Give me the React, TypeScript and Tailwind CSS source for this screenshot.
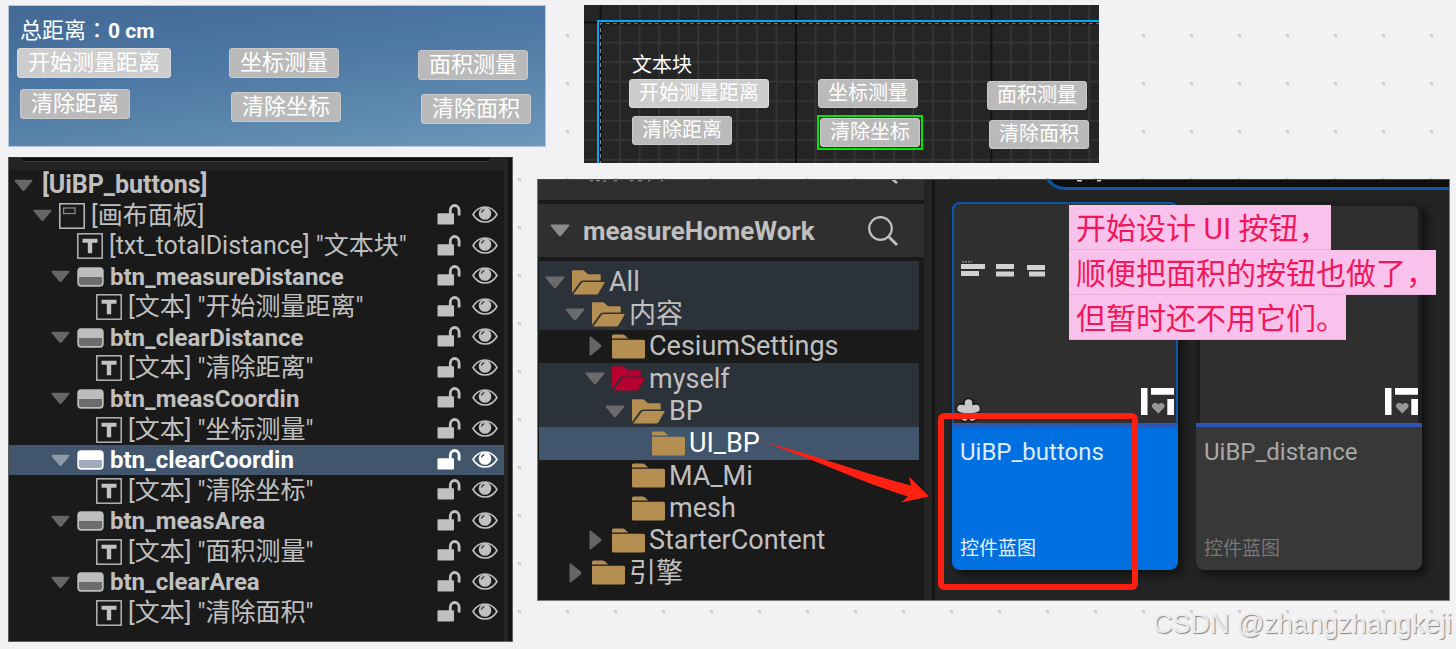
import React from "react";

type Kind = "root" | "canvas" | "text" | "button";

interface WidgetRow {
  kind: Kind;
  label: string;
  selected?: boolean;
}

const widgetRows: WidgetRow[] = [
  { kind: "root", label: "[UiBP_buttons]" },
  { kind: "canvas", label: "[画布面板]" },
  { kind: "text", label: '[txt_totalDistance] "文本块"' },
  { kind: "button", label: "btn_measureDistance" },
  { kind: "text", label: '[文本] "开始测量距离"' },
  { kind: "button", label: "btn_clearDistance" },
  { kind: "text", label: '[文本] "清除距离"' },
  { kind: "button", label: "btn_measCoordin" },
  { kind: "text", label: '[文本] "坐标测量"' },
  { kind: "button", label: "btn_clearCoordin", selected: true },
  { kind: "text", label: '[文本] "清除坐标"' },
  { kind: "button", label: "btn_measArea" },
  { kind: "text", label: '[文本] "面积测量"' },
  { kind: "button", label: "btn_clearArea" },
  { kind: "text", label: '[文本] "清除面积"' },
];

function DownArrow({ className }: { className: string }) {
  return (
    <svg viewBox="0 0 20 13" className={className} aria-hidden="true">
      <path d="M1.5.5h17c1 0 1.3.9.7 1.6l-7.800 9.500c-.8 1-2 1-2.800 0L.8 2.100C.2 1.400.5.5 1.500.5z" fill="currentColor" />
    </svg>
  );
}

function RightArrow() {
  return (
    <svg viewBox="0 0 13 20" className="h-5 w-[13px] text-[#666]" aria-hidden="true">
      <path d="M.5 1.500v17c0 1 .9 1.300 1.600.7l9.500-7.800c1-.8 1-2 0-2.800L2.100.8C1.400.2.5.5.5 1.500z" fill="currentColor" />
    </svg>
  );
}

function CanvasIcon() {
  return (
    <svg viewBox="0 0 26 26" className="h-[26px] w-[26px]" aria-hidden="true" fill="none">
      <rect x="0.8" y="0.8" width="24.400" height="24.400" stroke="#bdbdbd" strokeWidth="1.500" />
      <rect x="4.600" y="5" width="11.500" height="5.500" stroke="#858585" strokeWidth="1.300" />
    </svg>
  );
}

function TextIcon() {
  return (
    <svg viewBox="0 0 26 26" className="h-[26px] w-[26px]" aria-hidden="true">
      <rect x="0.800" y="0.800" width="24.400" height="24.400" fill="none" stroke="#b5b5b5" strokeWidth="1.500" />
      <path d="M5.500 5.800h15v4h-5.300v10.400h-4.400V9.800H5.500z" fill="#c2c2c2" />
    </svg>
  );
}

function ButtonIcon({ selected }: { selected?: boolean }) {
  return (
    <svg viewBox="0 0 27 20" className="h-5 w-[27px]" aria-hidden="true">
      <rect x="0.300" y="0.300" width="26.400" height="19.400" rx="4" fill={selected ? "#ffffff" : "#bdbdbd"} />
      <path d="M2 10h23v5.500a2.500 2.500 0 0 1-2.500 2.500h-18A2.500 2.500 0 0 1 2 15.500z" fill={selected ? "#9dabba" : "#6c6c6c"} />
    </svg>
  );
}

function LockIcon() {
  return (
    <svg viewBox="0 0 24 21" className="h-[21px] w-6" aria-hidden="true">
      <rect x="0.500" y="9.200" width="16.500" height="11.300" rx="0.800" fill="currentColor" />
      <path d="M13.300 10V6.300a4.300 4.700 0 0 1 8.800 0V11.500" fill="none" stroke="currentColor" strokeWidth="2.800" />
    </svg>
  );
}

function EyeIcon() {
  return (
    <svg viewBox="0 0 26 17" className="h-[17px] w-[26px]" aria-hidden="true">
      <path d="M1 8.500C4 3.500 8 1 13 1s9 2.500 12 7.500C22 13.500 18 16 13 16S4 13.500 1 8.500z" fill="none" stroke="currentColor" strokeWidth="1.600" />
      <circle cx="13" cy="7.500" r="6.300" fill="currentColor" />
      <path d="M9.700 6.200a3.400 3.400 0 0 1 2.300-2.400" fill="none" stroke="#1a1a1a" strokeWidth="1.100" strokeLinecap="round" />
    </svg>
  );
}

function WidgetTreeRow({ row }: { row: WidgetRow }) {
  const nested = { root: "pl-[5px]", canvas: "pl-6", button: "pl-[42px]", text: "" }[row.kind];
  const textIndent = row.label.startsWith("[txt") ? "pl-[68px]" : "pl-[87px]";
  const type = { root: "text-[25px] font-bold", canvas: "text-[25px]", text: "text-[25px]", button: "text-[24px] font-bold" }[row.kind];
  return (
    <li
      className={`flex min-h-0 items-center pr-[6px] ${row.kind === "text" ? textIndent : nested} ${
        row.selected ? "bg-[#41566d] text-white" : "text-[#c0c0c0]"
      }`}
    >
      {row.kind !== "text" && (
        <DownArrow className={`h-[13px] w-[19px] shrink-0 ${row.selected ? "text-[#8f9aa6]" : "text-[#666]"}`} />
      )}
      {row.kind !== "root" && (
        <span className={row.kind === "text" ? "shrink-0" : "ml-[7px] shrink-0"}>
          {row.kind === "canvas" && <CanvasIcon />}
          {row.kind === "text" && <TextIcon />}
          {row.kind === "button" && <ButtonIcon selected={row.selected} />}
        </span>
      )}
      <span
        className={`flex-1 whitespace-nowrap leading-[30px] ${row.kind === "root" ? "ml-[9px]" : "ml-[6px]"} ${type}`}
      >
        {row.label}
      </span>
      {row.kind !== "root" && (
        <span className="flex items-center gap-[11px] pb-[2px]">
          <button type="button" aria-label="锁定">
            <LockIcon />
          </button>
          <button type="button" aria-label="可视性">
            <EyeIcon />
          </button>
        </span>
      )}
    </li>
  );
}

function GameButton({ label, large, pale, className = "" }: { label: string; large?: boolean; pale?: boolean; className?: string }) {
  return (
    <button
      type="button"
      className={`shrink-0 whitespace-nowrap rounded-[3px] border text-white ${
        large ? "h-[30px] px-[10px] text-[22px] leading-[28px]" : "h-[29px] px-[9px] text-[20px] leading-[27px]"
      } ${pale ? "border-[#dadada] bg-[#cdcdcd]" : "border-[#c9c9c9] bg-[#bababa]"} ${className}`}
    >
      {label}
    </button>
  );
}

function GamePreview() {
  return (
    <section className="h-[142px] overflow-hidden border border-[#b4c6da] bg-[linear-gradient(172deg,#436994_0%,#4b75a3_35%,#5681a9_60%,#6c98ba_100%)] pl-2">
      <p className="mt-2 ml-[3px] text-[22px] leading-[34px] text-white">
        总距离<span className="font-['Noto_Sans_CJK_TC',sans-serif] leading-none">：</span>
        <b className="text-[21px]">0 cm</b>
      </p>
      <div className="flex items-start">
        <div className="flex w-[212px] flex-col items-start gap-[11px]">
          <GameButton large pale label="开始测量距离" />
          <GameButton large label="清除距离" className="ml-[3px]" />
        </div>
        <div className="flex w-[189px] flex-col items-start gap-[14px]">
          <GameButton large label="坐标测量" />
          <GameButton large label="清除坐标" className="ml-[2px]" />
        </div>
        <div className="flex flex-col items-start gap-[14px] pt-[2px]">
          <GameButton large label="面积测量" />
          <GameButton large label="清除面积" className="ml-[3px]" />
        </div>
      </div>
    </section>
  );
}

function DesignerPreview() {
  return (
    <section className="relative mr-[351px] ml-[38px] h-[158px] overflow-hidden bg-[#252525]">
      <svg className="absolute inset-0 h-full w-full" aria-hidden="true">
        <defs>
          <pattern id="minor" x="15.500" y="17" width="19.550" height="19.550" patternUnits="userSpaceOnUse">
            <path d="M1 0v19.550M0 1h19.550" stroke="#343434" strokeWidth="2" />
          </pattern>
          <pattern id="major" x="15.500" y="16.500" width="195.500" height="195.500" patternUnits="userSpaceOnUse">
            <path d="M1 0v195.500M0 1h195.500" stroke="#0c0c0c" strokeWidth="1.800" />
          </pattern>
        </defs>
        <rect width="100%" height="100%" fill="url(#minor)" />
        <rect width="100%" height="100%" fill="url(#major)" />
        <path d="M16.500 160V18.300H1200" fill="none" stroke="#0c0c0c" strokeWidth="2" />
        <path d="M16.500 160V18.300H1200" fill="none" stroke="#858585" strokeWidth="1" strokeDasharray="4 3" />
        <path d="M14 160V16H1200" fill="none" stroke="#00a8f8" strokeWidth="2" />
      </svg>
      <div className="relative pt-[46px] pl-[45px]">
        <p className="ml-[3px] text-[20px] leading-[28px] text-white">文本块</p>
        <div className="flex items-start">
          <div className="flex w-[189px] flex-col items-start gap-[8px]">
            <GameButton pale label="开始测量距离" />
            <GameButton label="清除距离" className="ml-[3px]" />
          </div>
          <div className="flex w-[169px] flex-col items-start gap-[7px]">
            <GameButton label="坐标测量" />
            <div className="-ml-px flex border-2 border-[#00e600] p-px">
              <GameButton label="清除坐标" />
            </div>
          </div>
          <div className="flex flex-col items-start gap-[10px] pt-[2px]">
            <GameButton label="面积测量" />
            <GameButton label="清除面积" className="ml-[2px]" />
          </div>
        </div>
      </div>
    </section>
  );
}

function WidgetTree() {
  return (
    <section className="mr-[33px] flex h-[485px] border border-[#5e5e5e] border-t-[#333] bg-[#1a1a1a]">
      <div className="min-w-0 flex-1">
        <div className="h-3 bg-[#232323] pr-[14px] pl-[12px]">
          <div className="h-[4px] rounded-b-[14px] border-b border-[#3a3a3a] bg-[#0f0f0f]" />
        </div>
        <ul className="grid h-[458px] auto-rows-fr">
          {widgetRows.map((row) => (
            <WidgetTreeRow key={row.label} row={row} />
          ))}
        </ul>
      </div>
      <div className="w-1 bg-[#242424]" />
      <div className="w-1 bg-[#131313]" />
    </section>
  );
}

type Arrow = "down" | "right" | "none";

interface FolderRow {
  label: string;
  indent: string;
  arrow: Arrow;
  open?: boolean;
  red?: boolean;
  tone: string;
}

const folderRows: FolderRow[] = [
  { label: "All", indent: "pl-[6px]", arrow: "down", open: true, tone: "h-[37px] pt-[5px] bg-[#2c323a]" },
  { label: "内容", indent: "pl-[26px]", arrow: "down", open: true, tone: "flex-1 bg-[#2c323a]" },
  { label: "CesiumSettings", indent: "pl-[46px]", arrow: "right", tone: "flex-1" },
  { label: "myself", indent: "pl-[46px]", arrow: "down", open: true, red: true, tone: "flex-1 bg-[#2c323a]" },
  { label: "BP", indent: "pl-[66px]", arrow: "down", open: true, tone: "flex-1 bg-[#2c323a]" },
  { label: "UI_BP", indent: "pl-[86px]", arrow: "none", tone: "flex-1 bg-[#41566d] text-white" },
  { label: "MA_Mi", indent: "pl-[66px]", arrow: "none", tone: "flex-1" },
  { label: "mesh", indent: "pl-[66px]", arrow: "none", tone: "flex-1" },
  { label: "StarterContent", indent: "pl-[46px]", arrow: "right", tone: "flex-1" },
  { label: "引擎", indent: "pl-[26px]", arrow: "right", tone: "flex-1" },
];

function FolderIcon({ open, red }: { open?: boolean; red?: boolean }) {
  return (
    <svg viewBox="0 0 33 25" className={`h-[25px] w-[33px] shrink-0 ${red ? "text-[#b50030]" : "text-[#b58e52]"}`} aria-hidden="true" fill="currentColor">
      {open ? (
        <>
          <path d="M0 1.500Q0 .3 1.200.3H10.500Q11.500.3 12.300 1L16 4.300H27.500Q28.700 4.300 28.700 5.500V10.500H11.200Q9.200 10.500 8 12L0 23z" />
          <path d="M1.200 24.600L9.800 12.800Q10.400 12 11.400 12H32.300Q33 12 32.600 12.800L26.300 23.500Q25.600 24.600 24.300 24.600z" />
        </>
      ) : (
        <>
          <path d="M0 4.600V1.900Q0 .4 1.500.4H10.500Q11.500.4 12.300 1.100L16.300 4.600z" />
          <path d="M0 5.800H31.500Q33 5.800 33 7.300V23.100Q33 24.600 31.500 24.600H1.500Q0 24.600 0 23.100z" />
        </>
      )}
    </svg>
  );
}

function SourcesPanel() {
  return (
    <div className="flex w-[386px] shrink-0 flex-col bg-[#1a1a1a] text-[#c0c0c0]">
      <div className="h-5 bg-[#2f2f2f]">
        <svg viewBox="0 0 386 19" className="h-[19px] w-[386px]" aria-hidden="true">
          <path d="M52 .7h3M58 .7h4M65 1.200h3M76 .7h3M92 .7h3M100 .7h4M110 .7h2M123 .7h2" stroke="#8d8d8d" strokeWidth="1.300" />
          <path d="M354 -1l5 4" stroke="#c0c0c0" strokeWidth="2.500" />
        </svg>
      </div>
      <div className="mt-1 flex h-[53px] items-center bg-[#2f2f2f] pr-[26px] pl-3">
        <DownArrow className="h-[13px] w-5 text-[#8c8c8c]" />
        <h2 className="ml-[13px] flex-1 text-[26px] leading-8 font-bold">measureHomeWork</h2>
        <button type="button" aria-label="搜索">
          <svg viewBox="0 0 30 30" className="h-[30px] w-[30px]" aria-hidden="true" fill="none" stroke="#c0c0c0" strokeWidth="2.200">
            <circle cx="12.500" cy="12.500" r="11.300" />
            <path d="M20.500 20.500L29 29" strokeWidth="2.800" />
          </svg>
        </button>
      </div>
      <ul className="mt-1 mr-[5px] ml-px flex h-[328px] flex-col">
        {folderRows.map((row) => (
          <li key={row.label} className={`flex items-center ${row.indent} ${row.tone}`}>
            <span className="flex w-[27px] shrink-0 items-center">
              {row.arrow === "down" && <DownArrow className="h-[13px] w-5 text-[#6b6b6e]" />}
              {row.arrow === "right" && (
                <span className="ml-[4px]">
                  <RightArrow />
                </span>
              )}
            </span>
            <FolderIcon open={row.open} red={row.red} />
            <span className="ml-[4px] text-[27px] leading-8">{row.label}</span>
          </li>
        ))}
      </ul>
    </div>
  );
}

function WidgetBadge() {
  return (
    <svg viewBox="0 0 33 27" className="h-[27px] w-[33px]" aria-hidden="true">
      <path d="M0 0h6.500v27H0zM10 0h23v6.800H10zM26.300 11H33v16h-6.700z" fill="#fff" />
      <path d="M17.300 25.500l-5.500-5.600c-2.800-3.400 2-7.100 5.500-3.500 3.500-3.600 8.300.1 5.500 3.500z" fill="#979797" />
    </svg>
  );
}

function AssetCard({ name, selected }: { name: string; selected?: boolean }) {
  return (
    <article
      className={`flex h-[368px] flex-col overflow-hidden rounded-[8px] shadow-[5px_5px_8px_#111] ${
        selected ? "bg-[#0070e0]" : "bg-[#383838]"
      }`}
    >
      <div className={`flex h-[221px] items-end justify-between rounded-t-[8px] bg-[#2f2f2f] ${selected ? "border-2 border-b-0 border-[#0b56a6] pr-[2px] pl-[4px]" : "border-4 border-b-0 border-[#1d1d1d]"}`}>
        {selected ? (
          <svg viewBox="0 0 90 163" className="h-[163px] w-[90px] overflow-visible" aria-hidden="true">
            <path d="M4 1.800h10" stroke="#8b8b8b" strokeWidth="1.500" strokeDasharray="2 1" />
            <path d="M3 6.500h24M3 13.500h18M38 6.500h18M38 14h18M69 7.500h18M71 14h16" stroke="#d2d2d2" strokeWidth="4.800" />
            <g stroke="#191919" strokeWidth="11" strokeLinecap="round">
              <path d="M10.500 152V143M10.500 150l-7-1.500M10.500 150l7-1.500M10.500 151l-4 6M10.500 151l4 6" />
            </g>
            <g stroke="#c8c8c8" strokeWidth="7.500" strokeLinecap="round">
              <path d="M10.500 151V143M10.500 150l-7.500-1.500M10.500 150l7.500-1.500M10.500 151l-4 6M10.500 151l4 6" />
            </g>
          </svg>
        ) : (
          <span />
        )}
        <span className="mb-2">
          <WidgetBadge />
        </span>
      </div>
      <div className="h-1 bg-[#2c57b4]" />
      <div className="flex flex-1 flex-col justify-between px-2 pt-[9px] pb-[7px]">
        <h3 className={`text-[24px] leading-8 ${selected ? "text-[#dfecfa]" : "text-[#a8a8a8]"}`}>{name}</h3>
        <p className={`text-[19px] leading-7 ${selected ? "text-[#e8f2fc]" : "text-[#777]"}`}>控件蓝图</p>
      </div>
    </article>
  );
}

function ContentBrowser() {
  return (
    <section className="relative -ml-[9px] flex h-[422px] border border-[#777] border-t-[#444] bg-[#242424]">
      <SourcesPanel />
      <div className="ml-2 w-[3px] shrink-0 bg-[#151515]" />
      <div className="min-w-0 flex-1">
        <div className="ml-[108px] h-[10px] overflow-hidden">
          <div className="-mt-[30px] h-10 rounded-bl-[22px] border-b-3 border-l-3 border-[#0b56a6] bg-[#0f0f0f] pt-[29px] pl-[29px]">
            <svg viewBox="0 0 40 6" className="h-[6px] w-10" aria-hidden="true">
              <path d="M2 1.500h5M22 1.500h4" stroke="#d0d0d0" strokeWidth="2" />
            </svg>
          </div>
        </div>
        <div className="mt-3 grid grid-cols-2 gap-[18px] pr-[27px] pl-[17px]">
          <AssetCard name="UiBP_buttons" selected />
          <AssetCard name="UiBP_distance" />
        </div>
      </div>

      <div className="absolute top-[233px] left-[400px] h-[177px] w-[200px] rounded-[6px] border-[6px] border-[#ff2012]" />
      <svg viewBox="0 0 170 64" className="absolute top-[260px] left-[223px] h-16 w-[170px]" aria-hidden="true">
        <path d="M1 1.500C50 14 95 31 150 45.500L148 36.500L168 56.500L140 62.500L147 56.500C100 42 60 22 1 1.500z" fill="#ff2012" />
      </svg>
      <div className="absolute top-[25px] left-[531px] flex flex-col items-start text-[30px] leading-[40px] whitespace-nowrap text-[#f0185a]">
        <p className="border-b border-[#e3b0d8] bg-[#f8c2ec] pt-[4px] pr-[2px] pl-[7px]">开始设计 UI 按钮，</p>
        <p className="border-b border-[#e3b0d8] bg-[#f8c2ec] pt-[4px] pl-[7px]">顺便把面积的按钮也做了，</p>
        <p className="border-b border-[#e3b0d8] bg-[#f8c2ec] pt-[4px] pl-[7px]">但暂时还不用它们。</p>
      </div>
    </section>
  );
}

export default function App() {
  return (
    <main className="relative min-h-screen overflow-hidden bg-[#f2f2f4] pt-[5px] pr-[6px] pl-2 font-['Roboto','Noto_Sans_CJK_SC',sans-serif]">
      <svg className="absolute inset-0 h-full w-full" aria-hidden="true">
        <defs>
          <pattern id="dots" x="38" y="34" width="48" height="48" patternUnits="userSpaceOnUse">
            <rect width="3" height="3" fill="#cecece" />
          </pattern>
        </defs>
        <rect width="100%" height="100%" fill="url(#dots)" />
      </svg>
      <div className="relative grid grid-cols-[538fr_904fr] items-start">
        <div className="flex flex-col gap-[10px]">
          <GamePreview />
          <WidgetTree />
        </div>
        <div className="flex flex-col gap-4">
          <DesignerPreview />
          <ContentBrowser />
        </div>
      </div>
      <p className="absolute right-[4px] bottom-[7px] font-['Liberation_Sans',sans-serif] text-[27px] leading-9 text-[#ececee] [text-shadow:1px_1px_1px_#858585]">
        CSDN @zhangzhangkeji
      </p>
    </main>
  );
}
